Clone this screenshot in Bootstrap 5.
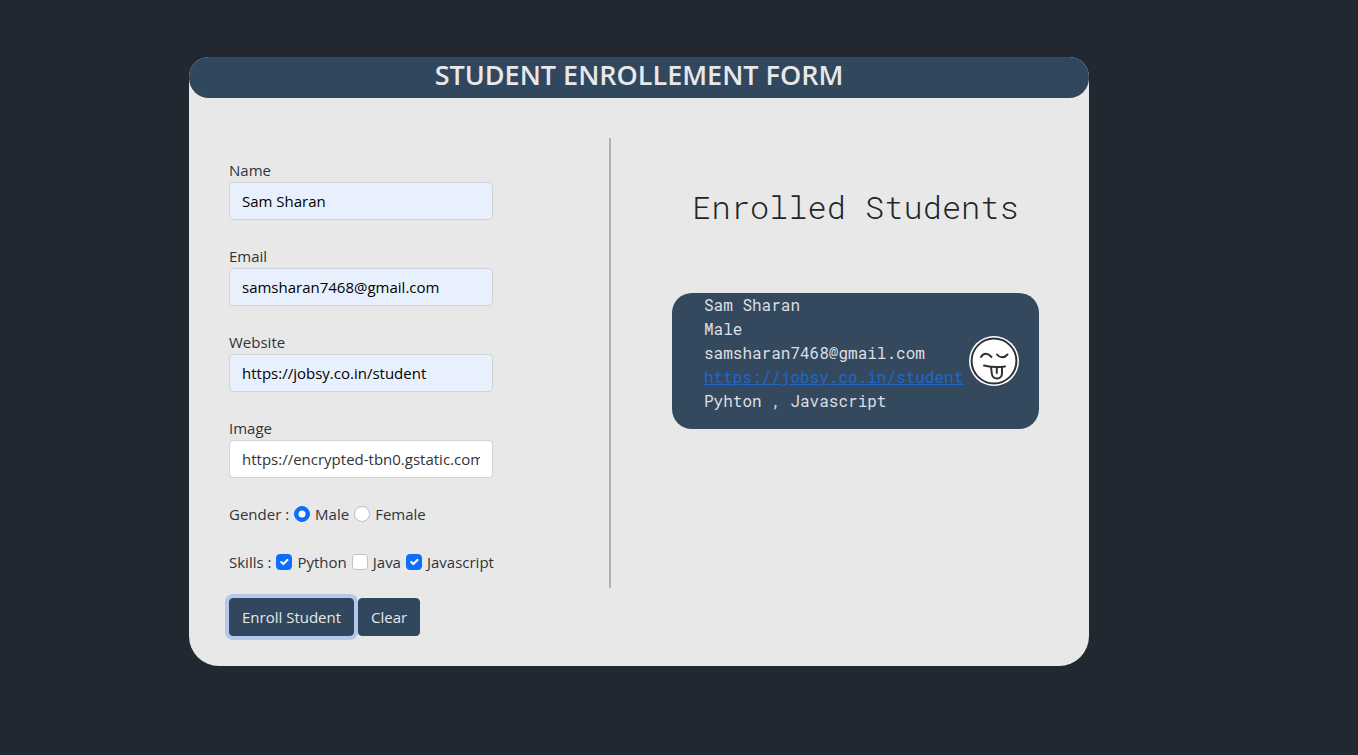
<!DOCTYPE html>
<html lang="en">
<head>
<meta charset="utf-8">
<meta name="viewport" content="width=device-width, initial-scale=1">
<title>Student Enrollment Form</title>
<link href="https://cdn.jsdelivr.net/npm/bootstrap@5.3.0/dist/css/bootstrap.min.css" rel="stylesheet">
<style>
  body { background: #222831; color: #30343a; font-family: "Open Sans", "Noto Sans", sans-serif; font-size: 15px; line-height: 24px; }
  .page { padding: 24px 12px; }
  .panel { background: #e8e8e8; border-radius: 20px 20px 30px 30px; }
  .panel-title { background: #30475e; color: #e8e8e8; border-radius: 20px; min-height: 41px; font-size: 27px; font-weight: 600; line-height: 36px; }
  .panel-body { display: grid; grid-template-columns: 1fr; padding-bottom: 30px; }
  .enroll-form { padding: 20px 40px 0; }
  .field { width: 264px; max-width: 100%; }
  .form-control { height: 38px; font-size: 15px; border-radius: 4px; border-color: #ced4da; color: #30343a; }
  .form-control.filled { background: #e8f0fe; color: #000; }
  .form-check-input { width: 16px; height: 16px; margin: 0; border-color: #bfbfbf; flex: none; }
  .form-check-input:checked { border-color: #0d6efd; }
  .choices { gap: 5px; white-space: nowrap; }
  .btn-enroll { --bs-btn-bg: #30475e; --bs-btn-color: #e8e8e8; --bs-btn-border-color: #30475e; --bs-btn-hover-bg: #3c5670; --bs-btn-hover-color: #fff; font-size: 15px; height: 38px; border-radius: 4px; }
  .btn-ring { box-shadow: 0 0 0 4px #b3c8ea; }
  .enrolled { padding: 50px 20px 0; font-family: "Roboto Mono", "Liberation Mono", monospace; font-size: 16px; }
  .enrolled h2 { font-size: 32px; font-weight: 300; line-height: 38px; margin-bottom: 67px; color: #212529; }
  .student { background: #34495e; color: #dcdfe3; border-radius: 20px; padding: 0 20px 16px 32px; }
  .student a { color: #1f66cc; }
  .avatar { width: 50px; height: 50px; flex: none; margin-top: 16px; }
  @media (min-width: 992px) {
    .page { padding: 57px 269px 57px 189px; }
    .panel-body { grid-template-columns: 7fr 8fr; padding-top: 40px; }
    .enrolled { align-self: start; min-height: 450px; border-left: 2px solid #b0b0b0; padding: 50px 50px 0 61px; }
  }
</style>
</head>
<body>
<main class="page">
  <div class="panel">
    <h1 class="panel-title text-center mb-0">STUDENT ENROLLEMENT FORM</h1>
    <div class="panel-body">
      <form class="enroll-form d-flex flex-column gap-4">
        <div class="field">
          <label class="d-block" for="name">Name</label>
          <input class="form-control filled" id="name" type="text" value="Sam Sharan">
        </div>
        <div class="field">
          <label class="d-block" for="email">Email</label>
          <input class="form-control filled" id="email" type="email" value="samsharan7468@gmail.com">
        </div>
        <div class="field">
          <label class="d-block" for="website">Website</label>
          <input class="form-control filled" id="website" type="url" value="https://jobsy.co.in/student">
        </div>
        <div class="field">
          <label class="d-block" for="image">Image</label>
          <input class="form-control" id="image" type="url" value="https://encrypted-tbn0.gstatic.com/images">
        </div>
        <div class="choices d-flex align-items-center" role="radiogroup" aria-labelledby="gender">
          <span id="gender">Gender :</span>
          <input class="form-check-input" type="radio" name="gender" id="male" checked>
          <label for="male">Male</label>
          <input class="form-check-input" type="radio" name="gender" id="female">
          <label for="female">Female</label>
        </div>
        <div class="choices d-flex align-items-center" role="group" aria-labelledby="skills">
          <span id="skills">Skills :</span>
          <input class="form-check-input" type="checkbox" id="python" checked>
          <label for="python">Python</label>
          <input class="form-check-input" type="checkbox" id="java">
          <label for="java">Java</label>
          <input class="form-check-input" type="checkbox" id="javascript" checked>
          <label for="javascript">Javascript</label>
        </div>
        <div class="d-flex gap-1">
          <button type="button" class="btn btn-enroll btn-ring">Enroll Student</button>
          <button type="reset" class="btn btn-enroll">Clear</button>
        </div>
      </form>
      <section class="enrolled">
        <h2 class="text-center">Enrolled Students</h2>
        <div class="student d-flex justify-content-between align-items-center">
          <ul class="list-unstyled mb-0">
            <li>Sam Sharan</li>
            <li>Male</li>
            <li>samsharan7468@gmail.com</li>
            <li><a href="https://jobsy.co.in/student">https://jobsy.co.in/student</a></li>
            <li>Pyhton , Javascript</li>
          </ul>
          <svg class="avatar" viewBox="0 0 50 50" role="img" aria-label="Student picture" fill="none" stroke="#303135" stroke-width="2" stroke-linecap="round" stroke-linejoin="round">
            <circle cx="25" cy="25" r="25" fill="#fff" stroke="none"/>
            <circle cx="25" cy="25" r="22.4"/>
            <path d="M12 21C14.500 16.500 19 17 22.500 21M28 18.500C31 22.500 35.500 22 38.500 18.500"/>
            <path d="M15 29.500C21 31 29 31.500 36 30.500"/>
            <path d="M22 31L22.800 37.500C23.500 44 32.500 44 33 37.500V31M27.800 31V37"/>
          </svg>
        </div>
      </section>
    </div>
  </div>
</main>
<script src="https://cdn.jsdelivr.net/npm/bootstrap@5.3.0/dist/js/bootstrap.bundle.min.js"></script>
</body>
</html>
